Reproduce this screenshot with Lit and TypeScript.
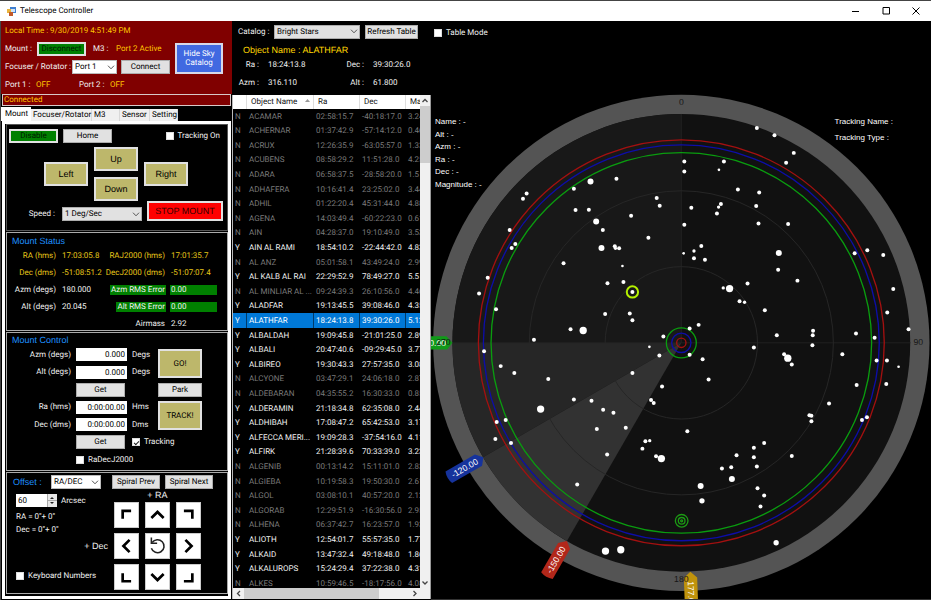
import { LitElement, html, svg, css } from "lit";
import { customElement } from "lit/decorators.js";
import { classMap } from "lit/directives/class-map.js";

type Row = [string, string, string, string, string];

const CATALOG: Row[] = [
  ["N", "ACAMAR", "02:58:15.7", "-40:18:17.0", "3.24"],
  ["N", "ACHERNAR", "01:37:42.9", "-57:14:12.0", "0.46"],
  ["N", "ACRUX", "12:26:35.9", "-63:05:57.0", "1.33"],
  ["N", "ACUBENS", "08:58:29.2", "11:51:28.0", "4.25"],
  ["N", "ADARA", "06:58:37.5", "-28:58:20.0", "1.5"],
  ["N", "ADHAFERA", "10:16:41.4", "23:25:02.0", "3.44"],
  ["N", "ADHIL", "01:22:20.4", "45:31:44.0", "4.88"],
  ["N", "AGENA", "14:03:49.4", "-60:22:23.0", "0.61"],
  ["N", "AIN", "04:28:37.0", "19:10:49.0", "3.53"],
  ["Y", "AIN AL RAMI", "18:54:10.2", "-22:44:42.0", "4.83"],
  ["N", "AL ANZ", "05:01:58.1", "43:49:24.0", "2.99"],
  ["Y", "AL KALB AL RAI", "22:29:52.9", "78:49:27.0", "5.5"],
  ["N", "AL MINLIAR AL ...", "09:24:39.3", "26:10:56.0", "4.46"],
  ["Y", "ALADFAR", "19:13:45.5", "39:08:46.0", "4.35"],
  ["Y", "ALATHFAR", "18:24:13.8", "39:30:26.0", "5.12"],
  ["Y", "ALBALDAH", "19:09:45.8", "-21:01:25.0", "2.89"],
  ["Y", "ALBALI", "20:47:40.6", "-09:29:45.0", "3.77"],
  ["Y", "ALBIREO", "19:30:43.3", "27:57:35.0", "3.08"],
  ["N", "ALCYONE", "03:47:29.1", "24:06:18.0", "2.87"],
  ["N", "ALDEBARAN", "04:35:55.2", "16:30:33.0", "0.85"],
  ["Y", "ALDERAMIN", "21:18:34.8", "62:35:08.0", "2.44"],
  ["Y", "ALDHIBAH", "17:08:47.2", "65:42:53.0", "3.17"],
  ["Y", "ALFECCA MERI...", "19:09:28.3", "-37:54:16.0", "4.11"],
  ["Y", "ALFIRK", "21:28:39.6", "70:33:39.0", "3.23"],
  ["N", "ALGENIB", "00:13:14.2", "15:11:01.0", "2.83"],
  ["N", "ALGIEBA", "10:19:58.3", "19:50:30.0", "2.61"],
  ["N", "ALGOL", "03:08:10.1", "40:57:20.0", "2.12"],
  ["N", "ALGORAB", "12:29:51.9", "-16:30:56.0", "2.95"],
  ["N", "ALHENA", "06:37:42.7", "16:23:57.0", "1.93"],
  ["Y", "ALIOTH", "12:54:01.7", "55:57:35.0", "1.77"],
  ["Y", "ALKAID", "13:47:32.4", "49:18:48.0", "1.86"],
  ["Y", "ALKALUROPS", "15:24:29.4", "37:22:38.0", "4.31"],
  ["N", "ALKES", "10:59:46.5", "-18:17:56.0", "4.08"],
];

// Stars on the chart: x, y, radius in chart units.
const STARS: number[][] = [
  [478, 275, 9], [556, 267, 6], [428, 297, 6], [286, 311, 6], [275, 327, 6], [433, 361, 6],
  [473, 360, 6], [495, 395, 9], [515, 421, 6], [600, 378, 6], [677, 325, 6], [686, 348, 6],
  [652, 444, 6], [235, 421, 6], [252, 463, 6], [241, 475, 6], [511, 475, 9], [551, 470, 6],
  [553, 476, 5], [564, 476, 6], [397, 521, 6], [574, 529, 4], [529, 581, 6], [577, 577, 6],
  [604, 607, 6], [169, 564, 6], [143, 612, 6], [194, 659, 6], [522, 673, 6], [596, 672, 6],
  [604, 692, 6], [418, 719, 6], [456, 723, 11], [308, 751, 6], [697, 741, 6],
  [978, 114, 6], [1031, 136, 6], [1089, 189, 6], [1066, 219, 6], [760, 215, 6], [760, 245, 6],
  [879, 215, 6], [864, 240, 4], [921, 299, 6], [985, 308, 6], [976, 349, 6], [870, 343, 6],
  [863, 352, 5], [781, 354, 6], [858, 371, 6], [983, 401, 6], [1072, 403, 6], [760, 405, 6],
  [811, 469, 6], [789, 484, 5], [758, 491, 4], [789, 506, 6], [822, 510, 6], [1044, 490, 9],
  [1042, 540, 6], [1100, 573, 6], [1272, 491, 6], [1310, 482, 6], [1358, 496, 6], [950, 582, 6],
  [896, 597, 11], [877, 595, 5], [926, 635, 6], [941, 638, 5], [1002, 662, 6], [1388, 598, 6],
  [1370, 669, 6], [1434, 719, 6], [803, 706, 6], [776, 717, 6], [1038, 737, 6], [1147, 724, 6],
  [1146, 737, 6], [1276, 732, 6], [1332, 745, 6],
  [655, 772, 4], [685, 798, 6], [158, 785, 6], [208, 830, 6], [249, 851, 6], [351, 869, 6],
  [604, 851, 6], [693, 891, 6], [660, 932, 6], [668, 941, 6], [428, 930, 6], [481, 934, 6],
  [328, 959, 11], [516, 961, 6], [547, 970, 6], [223, 992, 6], [196, 998, 6], [497, 1019, 6],
  [584, 1015, 6], [192, 1049, 6], [239, 1061, 6], [643, 1056, 6], [656, 1054, 5], [634, 1078, 6],
  [528, 1096, 6], [675, 1101, 6], [691, 1108, 11], [438, 1186, 6], [523, 1386, 11], [569, 1382, 11],
  [776, 796, 6], [815, 809, 6], [833, 870, 6], [969, 774, 6], [1060, 794, 6], [1071, 806, 11],
  [1083, 825, 6], [1145, 767, 6], [1235, 794, 6], [1338, 813, 6], [1369, 813, 6], [1404, 832, 4],
  [1367, 884, 6], [1278, 887, 6], [1195, 942, 6], [1136, 978, 6], [1142, 979, 6], [1142, 996, 6],
  [1294, 992, 6], [1309, 984, 6], [769, 1026, 6], [1000, 1061, 6], [969, 1075, 6], [917, 1098, 6],
  [969, 1104, 6], [1083, 1100, 6], [978, 1132, 6], [873, 1138, 6], [901, 1134, 6], [903, 1169, 9],
  [809, 1190, 9], [813, 1235, 8], [980, 1197, 6], [1000, 1219, 6], [989, 1252, 6], [1036, 1361, 8],
];

const chevron = html`<svg class="chev" viewBox="0 0 8 5" aria-hidden="true">
  <path d="M1 .7 4 3.8 7 .7" fill="none" stroke="#555" />
</svg>`;

const NUDGES: [string, string][] = [
  ["Up left", "M21 9.500H10V20"],
  ["Up", "M7 19 15 11 23 19"],
  ["Up right", "M9 9.500H20V20"],
  ["Left", "M19 7 11 15 19 23"],
  ["Reset", ""],
  ["Right", "M11 7 19 15 11 23"],
  ["Down left", "M10 10V20.500H21"],
  ["Down", "M7 11 15 19 23 11"],
  ["Down right", "M20 10V20.500H9"],
];

@customElement("app-root")
export class AppRoot extends LitElement {
  static styles = css`
    :host {
      display: flex;
      flex-direction: column;
      height: 100vh;
      overflow: hidden;
      box-sizing: border-box;
      background: #000;
      color: #f0f0f0;
      font: 8px/12px Roboto, "Liberation Sans", sans-serif;
      text-rendering: geometricPrecision;
    }
    *, *::before { box-sizing: border-box; }
    button, input, select { font: inherit; margin: 0; border-radius: 0; color: #000; text-rendering: inherit; }
    button {
      padding: 0;
      height: 14px;
      width: 49px;
      background: #e1e1e1;
      border: 1px solid #adadad;
      white-space: nowrap;
    }
    label, span, output { white-space: nowrap; }

    .titlebar {
      display: flex;
      align-items: center;
      height: 21px;
      flex: none;
      padding-left: 7px;
      background: #fff;
      color: #000;
      border-top: 1px solid #444;
    }
    .titlebar h1 { flex: 1; margin: 0 0 0 4px; font: inherit; }
    .titlebar .logo { width: 9px; height: 9px; }
    .winbtn { width: 30px; height: 18px; background: none; border: 0; }
    .winbtn svg { width: 8px; height: 8px; display: block; margin: auto; }

    .body { flex: 1; min-height: 0; display: grid; grid-template-columns: 232px 199px 1fr; }

    /* left column */
    .left { display: flex; flex-direction: column; border-left: 1px solid #444; min-width: 0; }
    .conn { background: #800000; padding: 1px 9px 0 4px; display: flex; align-items: center; }
    .conn .lines { flex: 1; }
    .line { display: flex; align-items: center; height: 18px; }
    .orange { color: #ffc400; }
    .w31 { width: 31px; }
    .w32 { width: 32px; }
    .w43 { width: 43px; }
    .w23 { width: 23px; }
    .w67 { width: 67px; }
    .push { margin-left: auto; }
    .row .push { margin-right: 3px; }
    .connect { margin-right: 5px; }
    .green { background: #008000; border: 2px solid #e1e1e1; line-height: 10px; color: #001a00; }
    .disc { margin-right: 7px; }
    .hide { width: 48px; height: 31px; background: #4169e1; border: 2px solid #d8d8e8; color: #fff; line-height: 9px; }
    .msg { height: 12px; line-height: 10px; background: #800000; border: 1px solid #d8c8c8; color: #ffc400; padding-left: 1px; margin: 0 1px 1px; }
    .tabs { display: flex; align-items: flex-end; height: 14px; }
    .tab { width: 28px; height: 12px; padding: 0 0 0 2px; text-align: left; background: #f0f0f0; border: 0; border-right: 1px solid #d9d9d9; }
    .tab.wide { width: 61px; }
    .tab.mid { width: 30px; }
    .tab.on { width: 30px; height: 14px; padding-left: 4px; background: #fff; border: 0; }
    .page { flex: 1; border: 3px solid #fff; padding: 0 0 2px; margin: 0 1px 1px; display: flex; flex-direction: column; gap: 1px; }
    .group { margin: 0 0 0 1px; border: 1px solid #aaa; }
    h2 { margin: 0; font: 9px/12px "Liberation Sans", sans-serif; color: #1e90ff; }

    .pad { border-color: #555; height: 107px; padding: 2px 4px 0 2px; }
    .row { display: flex; align-items: center; }
    .row.top { height: 17px; gap: 5px; }
    .check { display: flex; align-items: center; gap: 4px; }
    .check input {
      appearance: none;
      flex: none;
      width: 8px;
      height: 8px;
      background: #fff;
      border: 1px solid #ddd;
      display: grid;
      place-items: center;
    }
    .check input:checked::before {
      content: "";
      width: 5px;
      height: 3px;
      border: solid #222;
      border-width: 0 0 1px 1px;
      transform: rotate(-45deg);
    }
    .keys { display: grid; grid-template: 24px 24px / 44px 44px 44px; gap: 6px; margin: 3px 0 0 35px; font: 9px/12px "Liberation Sans", sans-serif; }
    .keys button { width: 44px; height: 24px; }
    .keys .side { grid-row: 1 / 3; align-self: center; }
    .keys .kl { grid-column: 1; }
    .keys .ku, .keys .kd { grid-column: 2; }
    .keys .ku { grid-row: 1; }
    .keys .kd { grid-row: 2; }
    .keys .kr { grid-column: 3; }
    .khaki { background: #bdb76b; border: 2px solid #e1e1e1; }
    .speed { align-items: flex-end; justify-content: flex-end; gap: 5px; }
    .speed label { margin-right: 2px; line-height: 14px; }
    .stop { width: 76px; height: 20px; background: #f00; border: 2px solid #e1e1e1; color: #300; font: 9px/12px "Liberation Sans", sans-serif; }

    .sel { display: inline-grid; align-items: center; height: 14px; }
    .sel > * { grid-area: 1 / 1; }
    .sel select { appearance: none; width: 100%; height: 14px; padding: 0 0 0 2px; background: #fff; border: 1px solid #bbb; outline: 0; }
    .sel.grey select { background: #e1e1e1; border-color: #adadad; }
    .sel .chev { justify-self: end; width: 8px; height: 5px; margin-right: 2px; pointer-events: none; }
    .s45 { width: 45px; }
    .s50 { width: 50px; }
    .s80 { width: 80px; }
    .s86 { width: 86px; }

    .stat { height: 99px; padding: 2px 0 0 5px; }
    .stat dl { margin: 0; display: grid; grid-template-columns: 45px 44px 57px 1fr; grid-auto-rows: 17px; column-gap: 4px; align-items: center; justify-items: end; }
    .stat dd { margin: 0; justify-self: start; }
    .stat .yel { color: #e6c619; }
    .stat dt, .stat dd { line-height: 10px; padding: 0 1px; white-space: nowrap; }
    .stat .ok { background: #008000; }
    .stat dd.ok { width: 47px; }
    .c3 { grid-column: 3; }

    .ctl { height: 139px; padding: 1px 0 0 5px; }
    .ctlgrid { display: grid; grid-template-columns: 59px 51px 21px 44px; column-gap: 5px; grid-template-rows: 17px 18px 17px 18px 17px 18px 17px; align-items: center; }
    .ctlgrid label.r { text-align: right; }
    .ctlgrid input.num { width: 51px; height: 13px; text-align: right; border: 0; background: #fff; padding: 0 2px 0 0; }
    .ctlgrid .c2 { grid-column: 2; }
    .ctlgrid .c34 { grid-column: 3 / 5; }
    .ctlgrid .c24 { grid-column: 2 / 5; }
    .ctlgrid .big { grid-column: 4; width: 44px; height: 29px; }
    .ctlgrid .go { grid-row: 1 / 3; }
    .ctlgrid .track { grid-row: 4 / 6; }
    .ctlgrid .park { grid-column: 4; width: 44px; }
    .ctlgrid .r1 { grid-row: 1; }
    .ctlgrid .r4 { grid-row: 4; }

    .off { flex: 1; padding: 2px 0 0 6px; display: flex; flex-direction: column; }
    .off .head { height: 14px; gap: 5px; }
    .off .head h2 { width: 33px; }
    .off .head .prev { margin-left: 6px; width: 48px; }
    .off .head .next { width: 48px; }
    .offbody { display: flex; margin-top: 4px; }
    .offleft { width: 73px; display: flex; flex-direction: column; padding: 1px 0 0 3px; }
    .spin { display: flex; align-items: center; gap: 4px; height: 13px; margin-bottom: 3px; }
    .spinbox { display: flex; background: #fff; height: 13px; width: 41px; }
    .spinbox input { width: 31px; border: 0; padding: 0 2px; background: none; appearance: textfield; }
    .spinbox input::-webkit-inner-spin-button { appearance: none; }
    .spinbox svg { width: 10px; height: 13px; background: #e8e8e8; }
    .offleft p { margin: 0; height: 13px; line-height: 13px; white-space: nowrap; }
    .offleft .check { margin-top: 34px; }
    .cap { font: 9px/12px "Liberation Sans", sans-serif; white-space: nowrap; }
    .nudge { display: grid; grid-template-columns: 28px 25px 25px 25px; column-gap: 6px; row-gap: 5px; align-items: center; justify-items: center; margin: 1px 0 0 -6px; }
    .nudge .ra { grid-column: 3; height: 3px; line-height: 2px; }
    .nudge .dec { grid-column: 1; grid-row: 3; justify-self: end; }
    .nudge button { width: 25px; height: 26px; background: #fff; border: 1px solid #ccc; }
    .nudge svg { display: block; width: 23px; height: 24px; }
    .n1 { grid-column: 2; }

    /* catalog column */
    .cat { display: flex; flex-direction: column; min-width: 0; min-height: 0; }
    .cat .tools { height: 20px; padding: 1px 0 0 6px; gap: 5px; }
    .cat .tools label { width: 31px; }
    .cat .tools button { width: 53px; }
    .obj { margin: 3px 0 0 11px; color: #ffd700; }
    .facts { margin: 0; display: grid; grid-template-columns: 27px 51px 36px 1fr; column-gap: 9px; grid-auto-rows: 18px; align-items: center; }
    .facts dt { text-align: right; }
    .facts dd { margin: 0; }
    .list { flex: 1; min-height: 0; margin: 3px 0 1px; border-left: 1px solid #bbb; border-right: 1px solid #999; display: grid; grid-template: minmax(0, 1fr) 11px / minmax(0, 1fr) 10px; }
    .clip { overflow: hidden; }
    table { width: 188px; table-layout: fixed; border-collapse: separate; border-spacing: 0; }
    th { font-weight: normal; text-align: left; background: #fff; color: #111; height: 14px; padding: 0 0 0 4px; border-right: 1px solid #ddd; white-space: nowrap; overflow: hidden; }
    th svg { width: 5px; height: 3px; margin: 0 0 2px 8px; }
    .k1 { width: 14px; }
    .k2 { width: 67px; }
    .k3 { width: 46px; }
    .k4 { width: 46px; }
    td { height: 15px; padding: 0 0 0 2px; line-height: 12px; white-space: nowrap; overflow: hidden; border-right: 1px solid transparent; }
    tr:nth-child(5n + 2) td, tr:nth-child(5n + 4) td { height: 14px; }
    .dim { color: #7a7a7a; }
    .sel-row td { background: #0078d7; border-right-color: #013a68; color: #fff; }
    .vbar, .hbar { background: #f0f0f0; display: flex; align-items: center; }
    .vbar { flex-direction: column; }
    .hbar { grid-column: 1 / 3; padding-right: 10px; }
    .vbar svg, .hbar svg { width: 11px; height: 11px; flex: none; }
    .vbar svg { width: 10px; }
    .vthumb { width: 10px; height: 57px; background: #cdcdcd; margin-bottom: auto; }
    .hthumb { width: 135px; height: 11px; background: #cdcdcd; margin-right: auto; }

    /* sky column */
    .sky { display: flex; flex-direction: column; min-width: 0; min-height: 0; }
    .sky .mode { height: 23px; padding-left: 3px; flex: none; }
    .chart { flex: 1; min-height: 0; margin-top: 46px; position: relative; border-bottom: 1px solid #333; }
    .chart > svg { display: block; width: 100%; height: 100%; }
    .info { position: absolute; top: 26px; left: 4px; margin: 0; padding: 0; list-style: none; font: 8px/12px "Liberation Sans", sans-serif; text-rendering: auto; color: #fff; }
    .info li:nth-child(even) { line-height: 13px; }
    .info.track { left: auto; right: 38px; top: 24px; }
    .info.track li { line-height: 16px; }
    .az { font: 26px "Liberation Sans", sans-serif; fill: #161616; text-anchor: middle; }
    .tag { font: 26px "Liberation Sans", sans-serif; fill: #fff; text-anchor: middle; }
  `;

  private check(text: string, on = false, cls = "") {
    return html`<label class="check ${cls}"><input type="checkbox" .checked=${on} />${text}</label>`;
  }

  private select(id: string, value: string, cls: string, name: string) {
    return html`<span class="sel ${cls}"
      ><select id=${id} aria-label=${name}><option>${value}</option></select>${chevron}</span>`;
  }

  private connection() {
    return html`<section class="conn">
        <div class="lines">
          <div class="line orange">Local Time : 9/30/2019 4:51:49 PM</div>
          <div class="line">
            <span class="w32">Mount :</span><button class="green disc">Disconnect</button>
            <span class="w23">M3 :</span><span class="orange">Port 2 Active</span>
          </div>
          <div class="line">
            <label class="w67" for="foc">Focuser / Rotator :</label>
            ${this.select("foc", "Port 1", "s45", "Focuser / Rotator")}
            <button class="connect push">Connect</button>
          </div>
          <div class="line">
            <span class="w31">Port 1 :</span><span class="orange w43">OFF</span>
            <span class="w31">Port 2 :</span><span class="orange">OFF</span>
          </div>
        </div>
        <button class="hide">Hide Sky<br />Catalog</button>
      </section>
      <div class="msg">Connected</div>`;
  }

  private control() {
    return html`<section class="group ctl">
      <h2>Mount Control</h2>
      <div class="ctlgrid">
        <label class="r r1" for="azm">Azm (degs)</label><input class="num r1" id="azm" value="0.000" /><span class="r1">Degs</span>
        <button class="khaki big go">GO!</button>
        <label class="r" for="alt">Alt (degs)</label><input class="num" id="alt" value="0.000" /><span>Degs</span>
        <button class="c2">Get</button><button class="park">Park</button>
        <label class="r r4" for="ra">Ra (hms)</label><input class="num r4" id="ra" value="0:00:00.00" /><span class="r4">Hms</span>
        <button class="khaki big track">TRACK!</button>
        <label class="r" for="dec">Dec (dms)</label><input class="num" id="dec" value="0:00:00.00" /><span>Dms</span>
        <button class="c2">Get</button>${this.check("Tracking", true, "c34")}
        ${this.check("RaDecJ2000", false, "c24")}
      </div>
    </section>`;
  }

  private offset() {
    return html`<section class="group off">
      <div class="row head">
        <h2>Offset :</h2>
        ${this.select("off", "RA/DEC", "s50", "Offset")}
        <button class="prev">Spiral Prev</button><button class="next">Spiral Next</button>
      </div>
      <div class="offbody">
        <div class="offleft">
          <label class="spin"><span class="spinbox"><input type="number" value="60" />
            <svg viewBox="0 0 10 13" aria-hidden="true"><path d="M3 5 5 3 7 5ZM3 8 5 10 7 8Z" fill="#222" /><path d="M0 6.500H10M.5 0V13" stroke="#aaa" /></svg></span>Arcsec</label>
          <p>RA = 0"+ 0"</p>
          <p>Dec = 0"+ 0"</p>
          ${this.check("Keyboard Numbers")}
        </div>
        <div class="nudge">
          <span class="cap ra">+ RA</span><span class="cap dec">+ Dec</span>
          ${NUDGES.map(
            ([name, d], i) => html`<button aria-label=${name} class=${classMap({ n1: i % 3 === 0 })}>
              <svg viewBox="0 0 30 30">
                ${d
                  ? svg`<path d=${d} fill="none" stroke="#000" stroke-width="3.500" />`
                  : svg`<path d="M8 10.500A8.500 8.500 0 1 1 7 18" fill="none" stroke="#222" stroke-width="2" /><path d="M7 4V11.500H14.500" fill="none" stroke="#222" stroke-width="2" />`}
              </svg>
            </button>`
          )}
        </div>
      </div>
    </section>`;
  }

  private catalog() {
    return html`<section class="cat">
      <div class="row tools">
        <label for="cat">Catalog :</label>${this.select("cat", "Bright Stars", "s86 grey", "Catalog")}
        <button>Refresh Table</button>
      </div>
      <h2 class="obj">Object Name : ALATHFAR</h2>
      <dl class="facts">
        <dt>Ra :</dt><dd>18:24:13.8</dd><dt>Dec :</dt><dd>39:30:26.0</dd>
        <dt>Azm :</dt><dd>316.110</dd><dt>Alt :</dt><dd>61.800</dd>
      </dl>
      <div class="list">
        <div class="clip">
          <table>
            <thead>
              <tr>
                <th class="k1"></th>
                <th class="k2">Object Name<svg viewBox="0 0 5 3"><path d="M0 3 2.500 0 5 3Z" fill="#999" /></svg></th>
                <th class="k3">Ra</th><th class="k4">Dec</th><th>Ma</th>
              </tr>
            </thead>
            <tbody>
              ${CATALOG.map(
                (r) => html`<tr class=${classMap({ dim: r[0] === "N", "sel-row": r[1] === "ALATHFAR" })}>
                  ${r.map((c) => html`<td>${c}</td>`)}
                </tr>`
              )}
            </tbody>
          </table>
        </div>
        <div class="vbar">
          <svg viewBox="0 0 10 11"><path d="M2.500 7 5 4.500 7.500 7" fill="none" stroke="#444" stroke-width="1.300" /></svg>
          <div class="vthumb"></div>
          <svg viewBox="0 0 10 11"><path d="M2.500 4.500 5 7 7.500 4.500" fill="none" stroke="#444" stroke-width="1.300" /></svg>
        </div>
        <div class="hbar">
          <svg viewBox="0 0 11 11"><path d="M7 3 4.500 5.500 7 8" fill="none" stroke="#444" stroke-width="1.300" /></svg>
          <div class="hthumb"></div>
          <svg viewBox="0 0 11 11"><path d="M4.500 3 7 5.500 4.500 8" fill="none" stroke="#444" stroke-width="1.300" /></svg>
        </div>
      </div>
    </section>`;
  }

  private chart() {
    const tag = "M0 0 -18 -20H-120Q-128 0 -120 20H-16Z";
    return html`<svg viewBox="0 0 1500 1530" preserveAspectRatio="xMidYMin meet" role="img" aria-label="Sky chart">
      <circle cx="751" cy="760" r="746" fill="#545454" />
      <circle cx="751" cy="760" r="688" fill="#111" />
      <path d="M751 760V72A688 688 0 0 0 63 760Z" fill="#181818" />
      <path d="M751 760H63A688 688 0 0 0 155 1104Z" fill="#262626" />
      <path d="M751 760 155 1104A688 688 0 0 0 407 1356Z" fill="#323232" />
      <g fill="none" stroke="#262626" stroke-width="3">
        <circle cx="751" cy="760" r="229" />
        <circle cx="751" cy="760" r="457" />
        <path d="M751 72V760M63 760H1440" stroke-opacity=".7" />
      </g>
      <g fill="none" stroke-width="4">
        <circle cx="751" cy="760" r="610" stroke="#a31010" />
        <circle cx="751" cy="760" r="595" stroke="#0d0da8" />
        <circle cx="751" cy="760" r="572" stroke="#0a9c0f" />
        <circle cx="751" cy="760" r="45" stroke="#0a9c0f" />
        <circle cx="751" cy="760" r="29" stroke="#0d0da8" />
        <circle cx="751" cy="760" r="14" stroke="#a31010" />
        <circle cx="752" cy="1295" r="19" stroke="#1c9a14" />
        <circle cx="752" cy="1295" r="10" stroke="#1c9a14" />
        <circle cx="752" cy="1295" r="3" stroke="#1c9a14" />
        <circle cx="604" cy="607" r="17" stroke="#b4f000" stroke-width="6" />
      </g>
      <g fill="#fff">${STARS.map(([x, y, r]) => svg`<circle cx=${x} cy=${y} r=${r} />`)}</g>
      <g transform="translate(63 760)"><path d=${tag} fill="#109a18" /><text class="tag" x="-56" y="9">-90.00</text></g>
      <g transform="translate(156 1104) rotate(-30)"><path d=${tag} fill="#16339c" /><text class="tag" x="-65" y="9">-120.00</text></g>
      <g transform="translate(407 1356) rotate(-60)"><path d=${tag} fill="#b2271a" /><text class="tag" x="-65" y="9">-150.00</text></g>
      <g transform="translate(778 1448) rotate(88)">
        <path d="M0 0 18 -20H120V20H18Z" fill="#c0930c" /><text class="tag" x="68" y="9">177.60</text>
      </g>
      <text class="az" x="751" y="46">0</text>
      <text class="az" x="1463" y="768">90</text>
      <text class="az" x="751" y="1480">180</text>
      <text class="az" x="36" y="768">270</text>
    </svg>`;
  }

  render() {
    return html`
      <header class="titlebar">
        <svg class="logo" viewBox="0 0 9 9" aria-hidden="true">
          <rect x="3" y="0" width="6" height="6" fill="#3f7fd0" /><rect x="4" y="2" width="4" height="3" fill="#cfe4fa" />
          <rect x="0" y="2" width="4" height="4" fill="#e8b33c" /><rect x="2" y="5" width="4" height="4" fill="#c25a2a" />
        </svg>
        <h1>Telescope Controller</h1>
        <button class="winbtn" aria-label="Minimize"><svg viewBox="0 0 8 8"><path d="M0 4.500H7" stroke="#000" /></svg></button>
        <button class="winbtn" aria-label="Maximize"><svg viewBox="0 0 8 8"><path d="M1 .5H7.500V7H1Z" fill="none" stroke="#000" /></svg></button>
        <button class="winbtn" aria-label="Close"><svg viewBox="0 0 8 8"><path d="M.5 .5 7.500 7.500M7.500 .5 .5 7.500" stroke="#000" /></svg></button>
      </header>
      <main class="body">
        <div class="left">
          ${this.connection()}
          <nav class="tabs">
            <button class="tab on">Mount</button><button class="tab wide">Focuser/Rotator</button><button class="tab">M3</button
            ><button class="tab mid">Sensor</button><button class="tab">Setting</button>
          </nav>
          <div class="page">
            <section class="group pad">
              <div class="row top">
                <button class="green">Disable</button><button>Home</button>${this.check("Tracking On", false, "push")}
              </div>
              <div class="keys">
                <button class="khaki side kl">Left</button><button class="khaki ku">Up</button>
                <button class="khaki kd">Down</button><button class="khaki side kr">Right</button>
              </div>
              <div class="row speed">
                <label for="speed">Speed :</label>${this.select("speed", "1 Deg/Sec", "s80 grey", "Speed")}
                <button class="stop">STOP MOUNT</button>
              </div>
            </section>
            <section class="group stat">
              <h2>Mount Status</h2>
              <dl>
                <dt class="yel">RA (hms)</dt><dd class="yel">17:03:05.8</dd><dt class="yel">RAJ2000 (hms)</dt><dd class="yel">17:01:35.7</dd>
                <dt class="yel">Dec (dms)</dt><dd class="yel">-51:08:51.2</dd><dt class="yel">DecJ2000 (dms)</dt><dd class="yel">-51:07:07.4</dd>
                <dt>Azm (degs)</dt><dd>180.000</dd><dt class="ok">Azm RMS Error</dt><dd class="ok">0.00</dd>
                <dt>Alt (degs)</dt><dd>20.045</dd><dt class="ok">Alt RMS Error</dt><dd class="ok">0.00</dd>
                <dt class="c3">Airmass</dt><dd>2.92</dd>
              </dl>
            </section>
            ${this.control()} ${this.offset()}
          </div>
        </div>
        ${this.catalog()}
        <section class="sky">
          ${this.check("Table Mode", false, "mode")}
          <div class="chart">
            ${this.chart()}
            <ul class="info">
              <li>Name : -</li><li>Alt : -</li><li>Azm : -</li><li>Ra : -</li><li>Dec : -</li><li>Magnitude : -</li>
            </ul>
            <ul class="info track"><li>Tracking Name :</li><li>Tracking Type :</li></ul>
          </div>
        </section>
      </main>
    `;
  }
}
